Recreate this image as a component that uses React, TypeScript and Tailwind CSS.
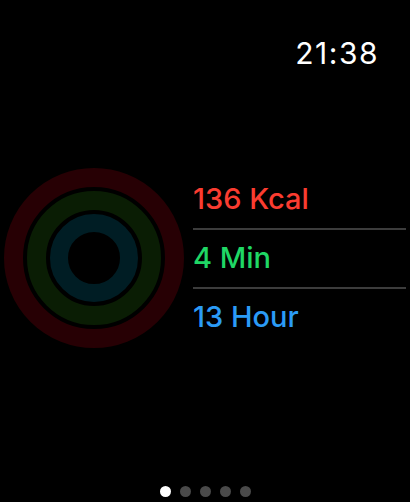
const stats = [
  { label: '136 Kcal', color: 'text-[#fa3c30]' },
  { label: '4 Min', color: 'text-[#1fd765]' },
  { label: '13 Hour', color: 'text-[#2b9bf6]' },
];

function Rings() {
  return (
    <svg width="180" height="180" viewBox="0 0 180 180" className="shrink-0">
      <circle cx="90" cy="90" r="80.5" fill="none" stroke="#270004" strokeWidth="19" />
      <circle cx="90" cy="90" r="57.5" fill="none" stroke="#0a1d04" strokeWidth="19" />
      <circle cx="90" cy="90" r="35" fill="none" stroke="#001d24" strokeWidth="18" />
    </svg>
  );
}

export default function App() {
  return (
    <div className="w-[410px] h-[502px] bg-black flex flex-col font-['Inter',sans-serif] overflow-hidden">
      <div className="flex justify-end pr-[31px] pt-[36px]">
        <span className="text-white text-[30px] leading-[34px] tracking-[1.5px]">21:38</span>
      </div>

      <div className="flex items-center mt-[98px] pl-[4px]">
        <Rings />
        <div className="flex flex-col ml-[9px] flex-1 pr-[4px]">
          {stats.map((s, i) => (
            <div key={s.label}>
              {i > 0 && <div className="h-[2px] bg-[#3c3c3c]" />}
              <div className={`h-[57px] flex items-center text-[29px] font-medium ${s.color}`}>
                {s.label}
              </div>
            </div>
          ))}
        </div>
      </div>

      <div className="mt-auto mb-[5px] flex justify-center gap-[9px]">
        <span className="w-[11px] h-[11px] rounded-full bg-white" />
        <span className="w-[11px] h-[11px] rounded-full bg-[#4a4a4a]" />
        <span className="w-[11px] h-[11px] rounded-full bg-[#4a4a4a]" />
        <span className="w-[11px] h-[11px] rounded-full bg-[#4a4a4a]" />
        <span className="w-[11px] h-[11px] rounded-full bg-[#4a4a4a]" />
      </div>
    </div>
  );
}
